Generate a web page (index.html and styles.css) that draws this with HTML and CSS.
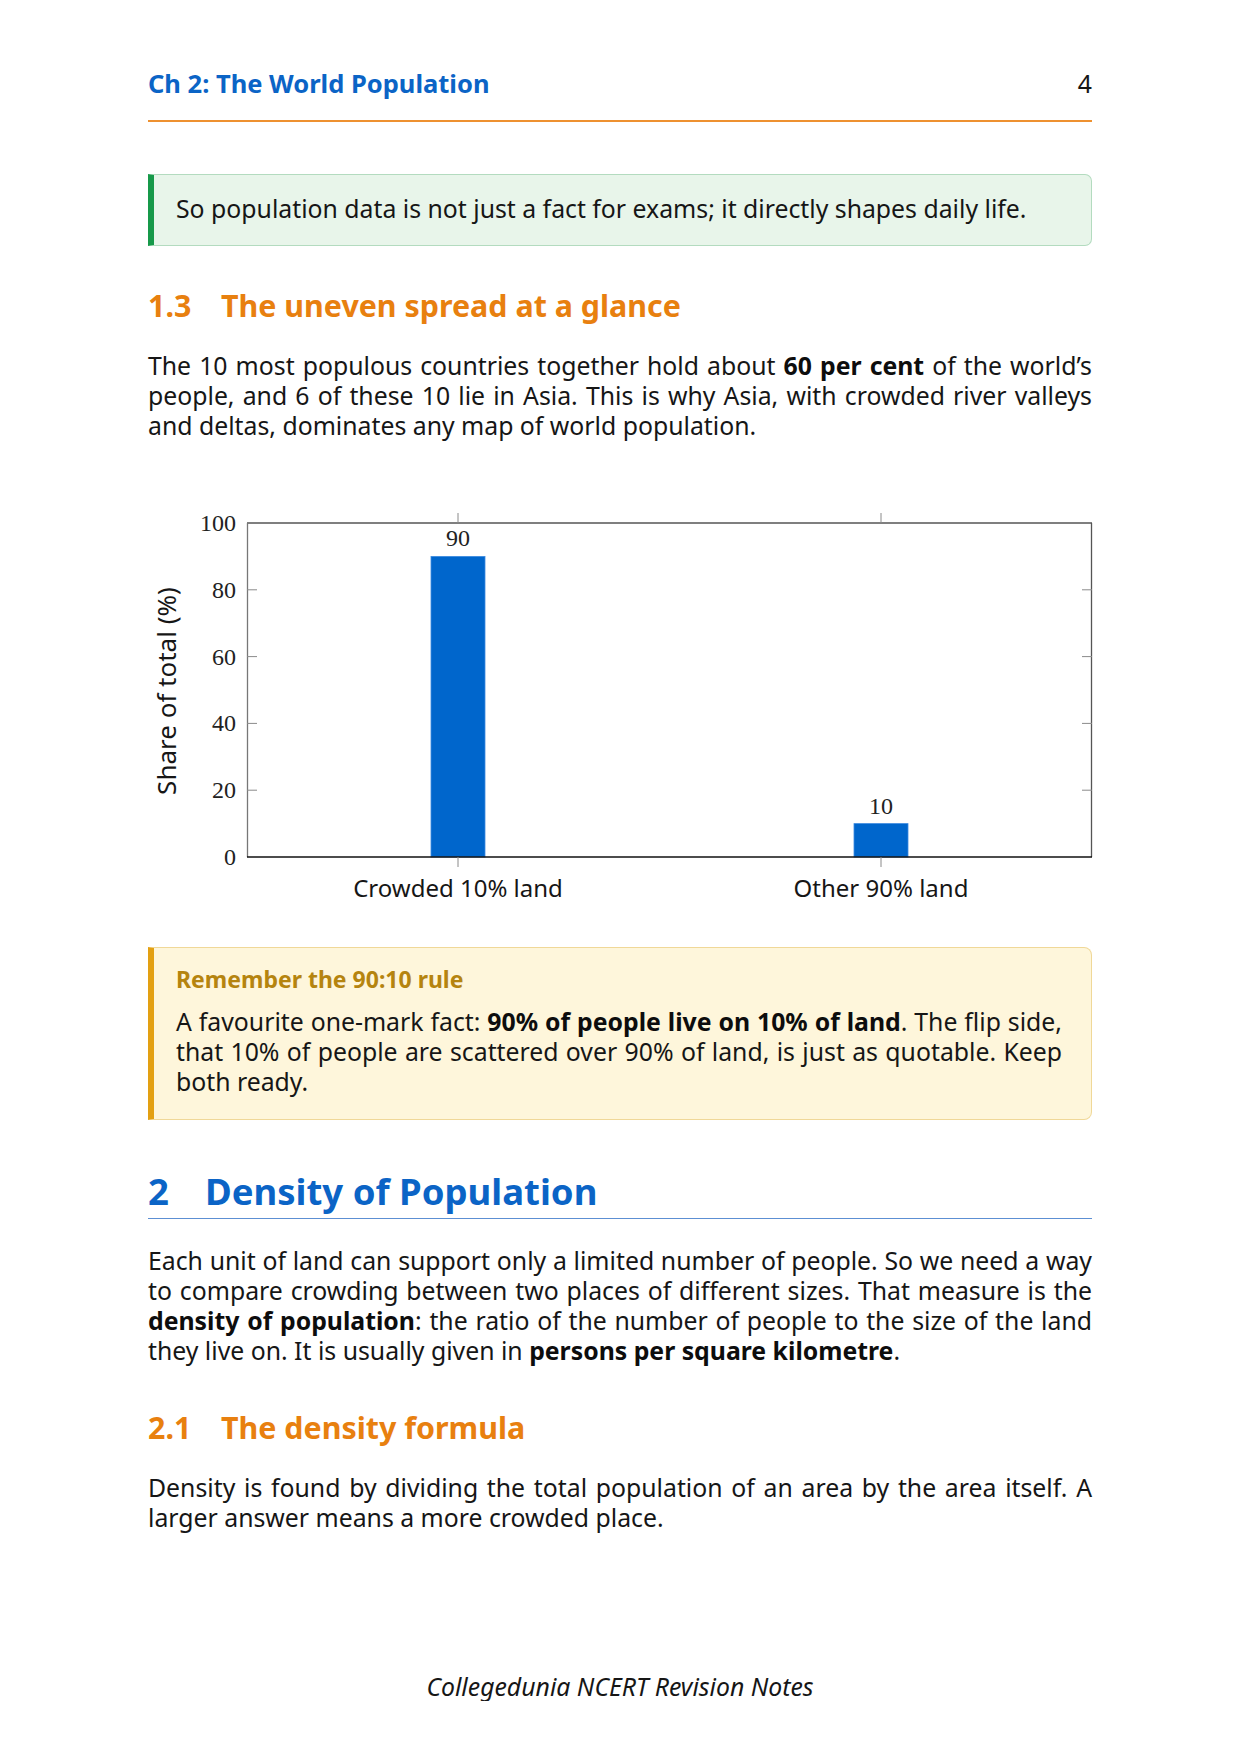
FILE: index.html
```html
<!DOCTYPE html>
<html lang="en">
<head>
<meta charset="utf-8">
<title>Ch 2: The World Population</title>
<link rel="stylesheet" href="styles.css">
</head>
<body>
<div class="page">
  <header class="running-head">
    <span class="chapter">Ch 2: The World Population</span>
    <span class="folio">4</span>
  </header>

  <div class="note-green">
    So population data is not just a fact for exams; it directly shapes daily life.
  </div>

  <h3 class="subsection"><span class="num">1.3</span>The uneven spread at a glance</h3>

  <p class="para">
    <span class="ln">The 10 most populous countries together hold about <b>60 per cent</b> of the world’s</span>
    <span class="ln">people, and 6 of these 10 lie in Asia. This is why Asia, with crowded river valleys</span>
    <span class="last">and deltas, dominates any map of world population.</span>
  </p>

  <svg class="chart" width="944" height="420" viewBox="0 0 944 420">
    <!-- bars -->
    <rect class="bar" x="283" y="57.4" width="54" height="300.6"/>
    <rect class="bar" x="706" y="324.6" width="54" height="33.4"/>
    <!-- frame -->
    <line class="ax-top" x1="99" y1="24" x2="944" y2="24"/>
    <line class="ax-right" x1="943.5" y1="24" x2="943.5" y2="358"/>
    <line class="ax-left" x1="99.5" y1="24" x2="99.5" y2="358"/>
    <line class="ax-bottom" x1="99" y1="358" x2="944" y2="358"/>
    <!-- ticks -->
    <g class="tick">
      <line x1="99" y1="291.2" x2="109" y2="291.2"/>
      <line x1="99" y1="224.4" x2="109" y2="224.4"/>
      <line x1="99" y1="157.6" x2="109" y2="157.6"/>
      <line x1="99" y1="90.8" x2="109" y2="90.8"/>
      <line x1="944" y1="291.2" x2="934" y2="291.2"/>
      <line x1="944" y1="224.4" x2="934" y2="224.4"/>
      <line x1="944" y1="157.6" x2="934" y2="157.6"/>
      <line x1="944" y1="90.8" x2="934" y2="90.8"/>
      <line x1="310" y1="24" x2="310" y2="14"/>
      <line x1="733" y1="24" x2="733" y2="14"/>
      <line x1="310" y1="358" x2="310" y2="368"/>
      <line x1="733" y1="358" x2="733" y2="368"/>
    </g>
    <!-- y tick labels -->
    <g class="ylab">
      <text x="88" y="366">0</text>
      <text x="88" y="299.2">20</text>
      <text x="88" y="232.4">40</text>
      <text x="88" y="165.6">60</text>
      <text x="88" y="98.8">80</text>
      <text x="88" y="32">100</text>
    </g>
    <!-- bar value labels -->
    <text class="val" x="310" y="47">90</text>
    <text class="val" x="733" y="314.6">10</text>
    <!-- category labels -->
    <text class="cat" x="310" y="398">Crowded 10% land</text>
    <text class="cat" x="733" y="398">Other 90% land</text>
    <!-- y axis title -->
    <text class="ytitle" x="0" y="0" transform="translate(28 192) rotate(-90)">Share of total (%)</text>
  </svg>

  <div class="note-yellow">
    <div class="note-title">Remember the 90:10 rule</div>
    <p class="para">
      <span class="ln">A favourite one-mark fact: <b>90% of people live on 10% of land</b>. The flip side,</span>
      <span class="ln">that 10% of people are scattered over 90% of land, is just as quotable. Keep</span>
      <span class="last">both ready.</span>
    </p>
  </div>

  <h2 class="section"><span class="num">2</span>Density of Population</h2>

  <p class="para">
    <span class="ln">Each unit of land can support only a limited number of people. So we need a way</span>
    <span class="ln">to compare crowding between two places of different sizes. That measure is the</span>
    <span class="ln"><b>density of population</b>: the ratio of the number of people to the size of the land</span>
    <span class="last">they live on. It is usually given in <b>persons per square kilometre</b>.</span>
  </p>

  <h3 class="subsection second"><span class="num">2.1</span>The density formula</h3>

  <p class="para">
    <span class="ln">Density is found by dividing the total population of an area by the area itself. A</span>
    <span class="last">larger answer means a more crowded place.</span>
  </p>

  <footer class="page-foot">Collegedunia NCERT Revision Notes</footer>
</div>
</body>
</html>
```

FILE: styles.css
```css
html, body {
  margin: 0;
  padding: 0;
  background: #ffffff;
}

body {
  font-family: "Noto Sans", "Open Sans", "DejaVu Sans", sans-serif;
  color: #161616;
  font-size: 24.8px;
  line-height: 30px;
}

.page {
  width: 944px;
  margin: 0 auto;
  padding-top: 68px;
}

/* running head */
.running-head {
  display: flex;
  justify-content: space-between;
  align-items: baseline;
  font-size: 25.5px;
  line-height: 30px;
  padding-bottom: 22px;
  border-bottom: 2px solid #ee9130;
}

.chapter {
  font-weight: 700;
  color: #0b64c6;
}

.folio {
  color: #161616;
  font-size: 24.8px;
}

/* green note */
.note-green {
  margin-top: 52px;
  background: #e8f5ea;
  border: 1px solid #b3dbbf;
  border-left: 6px solid #17994a;
  border-radius: 0 7px 7px 0;
  padding: 18px 28px 22px 22px;
}

/* headings */
.subsection {
  margin: 42px 0 0 0;
  font-size: 30.4px;
  line-height: 36px;
  font-weight: 700;
  color: #e8800f;
}

.subsection .num {
  display: inline-block;
  width: 73px;
}

.subsection.second {
  margin-top: 45px;
}

.section {
  margin: 48px 0 0 0;
  font-size: 36.5px;
  line-height: 46px;
  font-weight: 700;
  color: #0b64c6;
  padding-bottom: 4px;
  border-bottom: 1.5px solid #5c8fd3;
}

.section .num {
  display: inline-block;
  width: 57px;
}

/* paragraphs */
.para {
  margin: 26px 0 0 0;
}

.ln {
  display: block;
  text-align: justify;
  text-align-last: justify;
}

.last {
  display: block;
  text-align: left;
}

b {
  font-weight: 700;
  color: #0d0d0d;
}

/* chart */
.chart {
  display: block;
  margin-top: 59px;
  overflow: visible;
}

.bar {
  fill: #0066cc;
  stroke: #3d8be0;
  stroke-width: 0.8;
}

.ax-top, .ax-right {
  stroke: #555555;
  stroke-width: 1.3;
}

.ax-left {
  stroke: #777777;
  stroke-width: 1.3;
}

.ax-bottom {
  stroke: #111111;
  stroke-width: 1.5;
}

.tick line {
  stroke: #8a8a8a;
  stroke-width: 1;
}

.ylab text {
  font-family: "Liberation Serif", "Times New Roman", serif;
  font-size: 24px;
  fill: #222222;
  text-anchor: end;
}

.val {
  font-family: "Liberation Serif", "Times New Roman", serif;
  font-size: 24px;
  fill: #222222;
  text-anchor: middle;
}

.cat {
  font-family: "Noto Sans", "Open Sans", sans-serif;
  font-size: 24px;
  fill: #161616;
  text-anchor: middle;
}

.ytitle {
  font-family: "Noto Sans", "Open Sans", sans-serif;
  font-size: 26px;
  fill: #161616;
  text-anchor: middle;
}

/* yellow note */
.note-yellow {
  margin-top: 28px;
  background: #fef6db;
  border: 1px solid #f0d898;
  border-left: 6px solid #e3a012;
  border-radius: 0 8px 8px 0;
  padding: 17px 29px 23px 22px;
}

.note-title {
  font-size: 23px;
  line-height: 28px;
  font-weight: 700;
  color: #b5840f;
}

.note-yellow .para {
  margin-top: 13px;
}

/* footer */
.page-foot {
  margin-top: 139px;
  text-align: center;
  font-style: italic;
  font-size: 24.8px;
  line-height: 30px;
  color: #161616;
}
```
